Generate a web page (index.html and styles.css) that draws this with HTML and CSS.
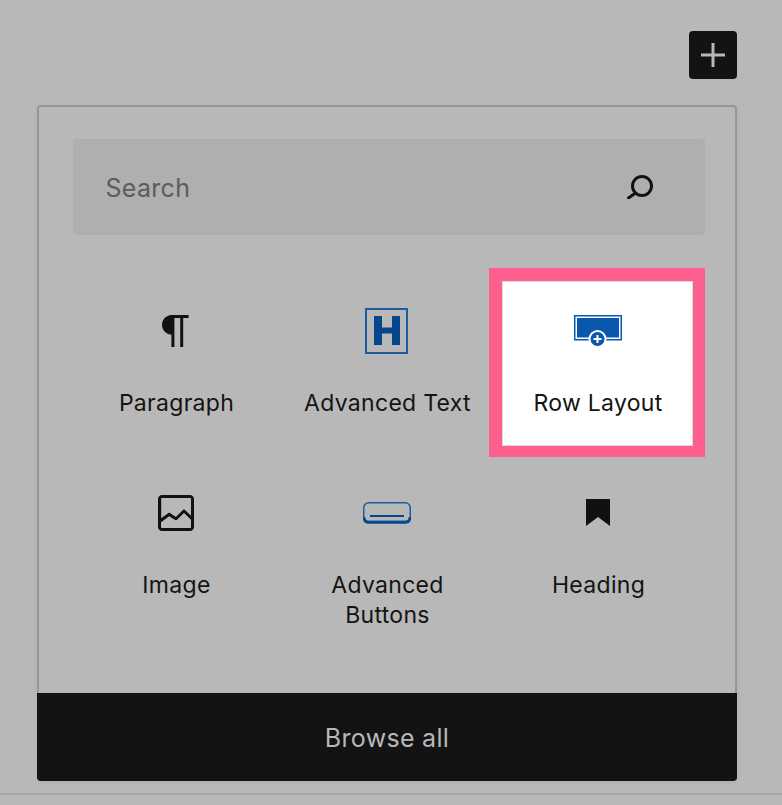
FILE: index.html
```html
<!DOCTYPE html>
<html lang="en">
<head>
<meta charset="utf-8">
<title>Block inserter</title>
<link rel="stylesheet" href="styles.css">
</head>
<body>
<div class="page">
  <div class="toolbar">
    <button class="toggle" type="button" aria-label="Add block">
      <svg class="toggle__icon" viewBox="0 0 24 24"><path d="M0 12h24M12 0v24"/></svg>
    </button>
  </div>
  <section class="panel">
    <div class="panel__body">
      <div class="search">
        <span class="search__text">Search</span>
        <svg class="search__icon" viewBox="0 0 26 24"><circle cx="15" cy="11" r="9.5"/><path d="M8.500 18 1.500 23"/></svg>
      </div>
      <div class="grid">
        <div class="item">
          <svg class="icon" viewBox="0 0 24 24"><path class="ink" d="M18.300 4H9.900v-.1l-.9.2c-2.300.4-4 2.400-4 4.800s1.700 4.400 4 4.800l.7.1V20h1.500V5.500h2.900V20h1.500V5.500h2.700V4z"/></svg>
          <span class="item__label">Paragraph</span>
        </div>
        <div class="item">
          <svg class="icon" viewBox="0 0 48 48"><rect class="frame" x="3" y="2" width="41" height="44"/><path class="hbar" d="M11 9h8v11.500h10V9h8v29h-8V26.500H19V38h-8z"/></svg>
          <span class="item__label">Advanced Text</span>
        </div>
        <div class="item item--active">
          <svg class="icon" viewBox="0 0 48 48"><rect class="row-frame" x="0.750" y="8.750" width="46.500" height="24"/><rect class="row-fill" x="3" y="11" width="42" height="19.500"/><circle class="row-ring" cx="23.500" cy="32" r="9"/><circle class="row-dot" cx="23.500" cy="32" r="7"/><path class="row-plus" d="M19.500 32h8M23.500 28v8"/></svg>
          <span class="item__label">Row Layout</span>
        </div>
        <div class="item">
          <svg class="icon" viewBox="0 0 24 24"><path class="ink" d="M19 3H5c-1.100 0-2 .9-2 2v14c0 1.100.9 2 2 2h14c1.100 0 2-.9 2-2V5c0-1.100-.9-2-2-2zM5 4.500h14c.3 0 .5.2.5.5v8.400l-3-2.900c-.3-.3-.8-.3-1 0L11.900 14 9 12c-.3-.2-.6-.2-.8 0l-3.600 2.600V5c-.1-.3.1-.5.4-.5zm14 15H5c-.3 0-.5-.2-.5-.5v-2.400l4.100-3 3 1.900c.3.2.7.2.9-.1L16 12l3.500 3.400V19c0 .3-.2.5-.5.5z"/></svg>
          <span class="item__label">Image</span>
        </div>
        <div class="item">
          <svg class="icon" viewBox="0 0 48 48"><rect class="btn-frame" x="0.750" y="13.750" width="46.500" height="18.500" rx="5"/><path class="btn-base" d="M1 28c0 3.500 2 5.500 5 5.500h36c3 0 5-2 5-5.500"/><path class="btn-line" d="M7 27h34"/></svg>
          <span class="item__label">Advanced Buttons</span>
        </div>
        <div class="item">
          <svg class="icon" viewBox="0 0 48 48"><path class="ink" d="M12 10h24v27L24 28 12 37z"/></svg>
          <span class="item__label">Heading</span>
        </div>
      </div>
    </div>
    <button class="browse" type="button">Browse all</button>
  </section>
  <div class="rule"></div>
</div>
</body>
</html>
```

FILE: styles.css
```css
* { box-sizing: border-box; }

html, body {
  margin: 0;
  height: 100%;
}

body {
  background: #b8b8b8;
  color: #141414;
  font-family: Inter, "Liberation Sans", sans-serif;
  overflow: hidden;
}

.page {
  padding-top: 31px;
}

.toolbar {
  display: flex;
  justify-content: flex-end;
  padding-right: 45px;
}

.toggle {
  display: flex;
  align-items: center;
  justify-content: center;
  width: 48px;
  height: 48px;
  padding: 0;
  border: 0;
  border-radius: 4px;
  background: #131313;
}

.toggle__icon {
  width: 24px;
  height: 24px;
  fill: none;
  stroke: #b8b8b8;
  stroke-width: 3;
}

.panel {
  display: flex;
  flex-direction: column;
  width: 700px;
  height: 676px;
  margin: 26px 0 0 37px;
  border: 2px solid #979797;
  border-bottom: 0;
  border-radius: 4px;
  box-shadow: 0 2px 4px rgba(0, 0, 0, 0.05);
}

.panel__body {
  flex: 1;
  padding: 32px 0 0 34px;
}

.search {
  display: flex;
  align-items: center;
  justify-content: space-between;
  width: 632px;
  height: 96px;
  padding: 2px 52px 0 32.500px;
  border-radius: 2px;
  background: #afafaf;
}

.search__text {
  font-size: 25px;
  letter-spacing: 0.3px;
  color: #5c5c5c;
}

.search__icon {
  width: 26px;
  height: 24px;
  margin-top: -2px;
  fill: none;
  stroke: #111;
  stroke-width: 3;
  stroke-linecap: round;
}

.grid {
  display: grid;
  grid-template-columns: repeat(3, 191px);
  grid-auto-rows: 165px;
  gap: 17px 20px;
  margin: 46px 0 0 7.5px;
  isolation: isolate;
}

.item {
  position: relative;
  display: flex;
  flex-direction: column;
  align-items: center;
  padding-top: 26px;
  text-align: center;
}

.item--active {
  margin: 0 0.5px 0 -0.5px;
  background: #fff;
  border: 1px solid #dcdcdc;
  padding-top: 25px;
}

.item--active::before {
  content: "";
  position: absolute;
  inset: -14px -13px -12px -14px;
  z-index: -1;
  background: #fd5f8f;
}

.icon {
  flex: none;
  width: 48px;
  height: 48px;
}

.item__label {
  width: 180px;
  margin-top: 33px;
  padding-left: 1px;
  font-size: 23px;
  line-height: 30px;
  letter-spacing: 0.3px;
  color: #141414;
}

.ink { fill: #111; }

.frame {
  fill: none;
  stroke: #1b5c9f;
  stroke-width: 2;
}

.hbar { fill: #06468c; }

.row-frame {
  fill: #fff;
  stroke: #0a58ae;
  stroke-width: 1.5;
}

.row-fill { fill: #0a58ae; }
.row-ring { fill: #fff; }
.row-dot { fill: #0a58ae; }

.row-plus {
  fill: none;
  stroke: #fff;
  stroke-width: 2;
}

.btn-frame {
  fill: none;
  stroke: #1b5c9f;
  stroke-width: 1.5;
}

.btn-base {
  fill: none;
  stroke: #06468c;
  stroke-width: 2.5;
}

.btn-line {
  fill: none;
  stroke: #06468c;
  stroke-width: 2;
}

.browse {
  flex: none;
  width: calc(100% + 4px);
  height: 88px;
  margin: 0 -2px;
  padding: 2px 0 0;
  border: 0;
  border-radius: 0 0 4px 4px;
  background: #131313;
  color: #b8b8b8;
  font-family: inherit;
  font-size: 25px;
  letter-spacing: 0.3px;
}

.rule {
  height: 2px;
  margin-top: 12px;
  background: #a8a8a8;
}
```
